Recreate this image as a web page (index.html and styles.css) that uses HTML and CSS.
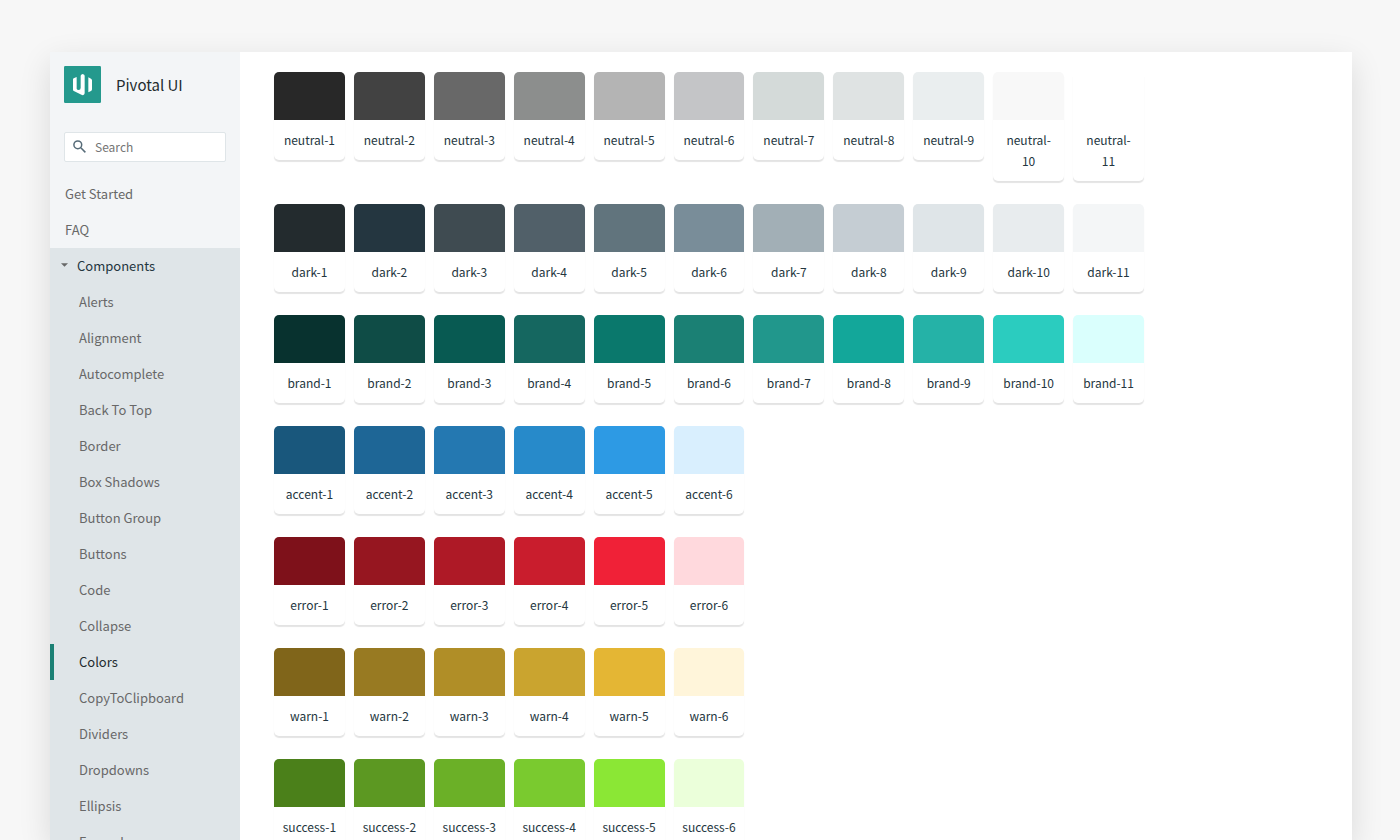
FILE: index.html
```html
<!DOCTYPE html>
<html lang="en">
<head>
<meta charset="utf-8">
<title>Pivotal UI – Colors</title>
<link rel="stylesheet" href="styles.css">
</head>
<body>
<div class="window">
  <aside class="sidebar">
    <a class="brand" href="#">
      <svg class="logo" viewBox="0 0 111 111" aria-hidden="true">
        <rect width="111" height="111" rx="4" fill="#24998d"/>
        <path fill="#fff" d="M27 40Q27 38 29 37L38 33V68Q39 72 44 72 50 72 50 65V29Q50 26 56 24 62 26 62 29V82Q61 89 54 87L31 76Q27 74 27 71ZM73 34 81 38Q84 40 84 43V70Q84 73 81 75L73 79Z"/>
      </svg>
      <span>Pivotal UI</span>
    </a>
    <label class="search">
      <svg class="search-icon" viewBox="0 0 13 13" aria-hidden="true"><circle cx="4.8" cy="4.8" r="3.9"/><path d="m7.8 7.8 4.6 4.6"/></svg>
      <input type="text" placeholder="Search" aria-label="Search">
    </label>
    <nav class="nav">
      <a class="item" href="#">Get Started</a>
      <a class="item" href="#">FAQ</a>
      <div class="group">
        <button class="toggle" type="button" aria-expanded="true"><svg class="caret" viewBox="0 0 8 4" aria-hidden="true"><path d="M0 0h8L4 4z"/></svg>Components</button>
        <a class="item sub" href="#">Alerts</a>
        <a class="item sub" href="#">Alignment</a>
        <a class="item sub" href="#">Autocomplete</a>
        <a class="item sub" href="#">Back To Top</a>
        <a class="item sub" href="#">Border</a>
        <a class="item sub" href="#">Box Shadows</a>
        <a class="item sub" href="#">Button Group</a>
        <a class="item sub" href="#">Buttons</a>
        <a class="item sub" href="#">Code</a>
        <a class="item sub" href="#">Collapse</a>
        <a class="item sub active" href="#" aria-current="page">Colors</a>
        <a class="item sub" href="#">CopyToClipboard</a>
        <a class="item sub" href="#">Dividers</a>
        <a class="item sub" href="#">Dropdowns</a>
        <a class="item sub" href="#">Ellipsis</a>
        <a class="item sub" href="#">Expander</a>
      </div>
    </nav>
  </aside>
  <main class="content" id="palettes"></main>
</div>
<script src="palette.js"></script>
</body>
</html>
```
FILE: styles.css
```css
* { box-sizing: border-box; }

body {
  margin: 0;
  height: 100vh;
  padding: 52px 48px 0 50px;
  overflow: hidden;
  background: #f7f7f7;
  color: #243640;
  font-family: "Noto Sans CJK SC", "Noto Sans", sans-serif;
  font-size: 12px;
}

.window {
  display: flex;
  height: 100%;
  background: #fff;
  box-shadow: 0 10px 30px rgba(0, 0, 0, 0.12);
}

.sidebar {
  flex: 0 0 190px;
  overflow: hidden;
  background: #f3f5f7;
}

.brand {
  display: flex;
  align-items: center;
  gap: 15px;
  padding: 14px 14px 0;
  color: #232b2e;
  font-size: 15px;
  line-height: 37px;
  text-decoration: none;
}

.logo { width: 37px; height: 37px; }

.search {
  display: flex;
  align-items: center;
  gap: 9px;
  height: 30px;
  margin: 29px 14px 14px;
  padding: 0 8px 1px;
  background: #fff;
  border: 1px solid #dfe5e8;
  border-radius: 2px;
}

.search-icon {
  flex: none;
  width: 13px;
  height: 13px;
  fill: none;
  stroke: #566b78;
  stroke-width: 1.5;
}

.search input {
  flex: 1;
  min-width: 0;
  padding: 0;
  border: 0;
  outline: 0;
  background: none;
  color: #243640;
  font: inherit;
}

.search input::placeholder { color: #757575; }

.item,
.toggle {
  display: flex;
  align-items: center;
  width: 100%;
  height: 36px;
  padding: 0 15px 2px;
  color: #686868;
  font-family: inherit;
  font-size: 13px;
  text-decoration: none;
}

.group { background: #dfe5e8; }

.toggle {
  gap: 9px;
  padding: 0 11px 2px;
  border: 0;
  background: none;
  color: #243640;
}

.caret { width: 7px; height: 4px; fill: #686868; }

.sub { padding-left: 29px; }

.active {
  padding-left: 25px;
  border-left: 4px solid #1b8074;
  color: #232b2e;
}

.content {
  flex: 1;
  min-width: 0;
  overflow: hidden;
  padding: 20px 34px;
}

.palette {
  display: grid;
  grid-template-columns: repeat(11, 1fr);
  align-items: start;
  gap: 9px;
  max-width: 870px;
  margin-bottom: 23px;
}

.card {
  overflow: hidden;
  border-radius: 5px;
  background: #fff;
  box-shadow: 0 2px 1px rgba(0, 0, 0, 0.11);
}

.swatch { height: 48px; }

.name {
  padding: 9px 8px 10px;
  line-height: 21px;
  text-align: center;
}
```
FILE: palette.js
```js
const palettes = {
  neutral: ["#282828", "#424242", "#686868", "#8c8e8d", "#b4b4b4", "#c4c5c7", "#d4dad9", "#dfe3e3", "#eaeeef", "#f8f8f8", "#ffffff"],
  dark: ["#232b2e", "#243640", "#3f4b51", "#516069", "#61747d", "#798d99", "#a2afb6", "#c5cdd3", "#dfe5e8", "#e8ecee", "#f4f6f7"],
  brand: ["#08322f", "#0f4c46", "#085a52", "#156760", "#0a786c", "#1b8074", "#21978c", "#13a79a", "#25b2a7", "#2bccbf", "#dafffd"],
  accent: ["#19577c", "#1e6696", "#2478b1", "#278aca", "#2d9ae4", "#d9effe"],
  error: ["#7e111a", "#961620", "#ae1926", "#c91d2d", "#f02137", "#ffd9dd"],
  warn: ["#80651a", "#987a22", "#b08e27", "#caa42f", "#e4b634", "#fff5da"],
  success: ["#4b801a", "#5c9822", "#6bb027", "#7aca2f", "#8be735", "#ebffda"]
};

const root = document.getElementById("palettes");

for (const [family, colors] of Object.entries(palettes)) {
  const row = document.createElement("section");
  row.className = "palette";
  row.setAttribute("aria-label", family);
  colors.forEach((color, i) => {
    const card = document.createElement("div");
    card.className = "card";
    const swatch = document.createElement("div");
    swatch.className = "swatch";
    swatch.style.background = color;
    const name = document.createElement("div");
    name.className = "name";
    name.textContent = `${family}-${i + 1}`;
    card.append(swatch, name);
    row.append(card);
  });
  root.append(row);
}
```
